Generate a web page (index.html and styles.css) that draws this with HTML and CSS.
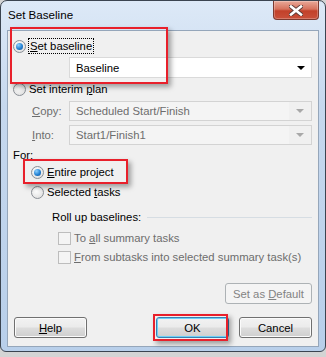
FILE: index.html
```html
<!DOCTYPE html>
<html lang="en">
<head>
  <meta charset="UTF-8" />
  <title>Set Baseline</title>
  <link rel="stylesheet" href="styles.css">
</head>
<body>
  <div class="window">
    <div class="titlebar">
      <span class="title">Set Baseline</span>
      <div class="close">
        <svg width="14" height="11" viewBox="0 0 14 11">
          <path d="M2 1.5 L12 9.5 M12 1.5 L2 9.5" stroke="#5a3a36" stroke-width="4.4" stroke-linecap="square" />
          <path d="M2 1.5 L12 9.5 M12 1.5 L2 9.5" stroke="#ffffff" stroke-width="2.6" stroke-linecap="square" />
        </svg>
      </div>
    </div>

    <div class="client">
      <div class="row first">
        <span class="radio on"></span>
        <span class="focus"><u>S</u>et baseline</span>
      </div>
      <div class="combo main">
        <span>Baseline</span>
        <span class="arrow"></span>
      </div>

      <div class="row interim">
        <span class="radio"></span>
        <span>Set interim <u>p</u>lan</span>
      </div>
      <div class="field copy">
        <label class="muted"><u>C</u>opy:</label>
        <div class="combo off"><span>Scheduled Start/Finish</span><span class="arrow-box"><span class="arrow"></span></span></div>
      </div>
      <div class="field into">
        <label class="muted"><u>I</u>nto:</label>
        <div class="combo off"><span>Start1/Finish1</span><span class="arrow-box"><span class="arrow"></span></span></div>
      </div>

      <div class="row for">For:</div>
      <div class="row indent entire">
        <span class="radio on"></span>
        <span><u>E</u>ntire project</span>
      </div>
      <div class="row indent selected">
        <span class="radio"></span>
        <span>Selected <u>t</u>asks</span>
      </div>

      <div class="row group">
        <span>Roll up baselines:</span>
        <span class="rule"></span>
      </div>
      <div class="row check first-check">
        <span class="box"></span>
        <span class="muted">To <u>a</u>ll summary tasks</span>
      </div>
      <div class="row check second-check">
        <span class="box"></span>
        <span class="muted"><u>F</u>rom subtasks into selected summary task(s)</span>
      </div>

      <div class="default-row">
        <button class="btn disabled">Set as <u>D</u>efault</button>
      </div>
      <div class="actions">
        <button class="btn help"><u>H</u>elp</button>
        <button class="btn ok">OK</button>
        <button class="btn cancel">Cancel</button>
      </div>
    </div>

    <div class="mark mark-baseline"></div>
    <div class="mark mark-entire"></div>
    <div class="mark mark-ok"></div>
  </div>
</body>
</html>
```

FILE: styles.css
```css
* {
  box-sizing: border-box;
}

body {
  margin: 0;
  background: #d4d4d4;
  font-family: "Liberation Sans", Arial, sans-serif;
  font-size: 11.3px;
  color: #000;
}

.window {
  position: relative;
  width: 326px;
  height: 352px;
  border: 1px solid #3b4450;
  border-radius: 7px 7px 6px 6px;
  background: linear-gradient(#dde9f7, #c6d8ee 30%, #b8cfea);
  padding: 0 6px 4px 6px;
  display: flex;
  flex-direction: column;
}

.titlebar {
  height: 29px;
  display: flex;
  justify-content: space-between;
  align-items: flex-start;
}

.title {
  margin: 7px 0 0 1px;
  font-size: 11.6px;
}

.close {
  width: 46px;
  height: 19px;
  border: 1px solid #7c3a30;
  border-top: none;
  border-radius: 0 0 4px 4px;
  background: linear-gradient(#e9a999, #d6725d 45%, #c2412a 55%, #c9503a);
  box-shadow: inset 0 0 0 1px rgba(255,255,255,0.25);
  display: flex;
  align-items: center;
  justify-content: center;
}

.client {
  height: 317px;
  background: #f0f0f0;
  border: 1px solid #95a6ba;
  padding: 6px 6px 0 5px;
  display: flex;
  flex-direction: column;
}

.row {
  height: 16px;
  display: flex;
  align-items: center;
  white-space: nowrap;
}

.first { margin-top: 1px; }
.interim { margin-top: 3px; }
.copy { margin-top: 4px; }
.into { margin-top: 4px; }
.for { margin-top: 2px; }
.entire { margin-top: 1px; }
.selected { margin-top: 4px; }
.group { margin-top: 9px; padding-left: 39px; }
.first-check { margin-top: 5px; }
.second-check { margin-top: 3px; }

.indent {
  padding-left: 18px;
}

.check {
  padding-left: 45px;
}

.radio {
  width: 13px;
  height: 13px;
  border-radius: 50%;
  border: 1px solid #8a8f96;
  background: radial-gradient(circle at 40% 35%, #ffffff, #e4e4e4 70%, #d2d2d2);
  margin-right: 3px;
  flex: none;
  position: relative;
}

.radio.on::after {
  content: "";
  position: absolute;
  left: 2px;
  top: 2px;
  width: 7px;
  height: 7px;
  border-radius: 50%;
  background: radial-gradient(circle at 35% 30%, #8fd2ff, #2482d4 55%, #0d4f93);
}

.focus {
  border: 1px dotted #000;
  padding: 0 1px;
  line-height: 14px;
  margin-left: -1px;
}

.combo {
  display: flex;
  align-items: center;
  justify-content: space-between;
  white-space: nowrap;
}

.combo.main {
  margin: 3px 0 0 56px;
  height: 21px;
  background: #fff;
  border: 1px solid #dadada;
  padding: 0 6px 0 6px;
}

.arrow {
  width: 0;
  height: 0;
  border-left: 4px solid transparent;
  border-right: 4px solid transparent;
  border-top: 4px solid #000;
}

.field {
  display: flex;
  align-items: center;
  height: 20px;
}

.field label {
  width: 56px;
  padding-left: 19px;
}

.combo.off {
  flex: 1;
  height: 20px;
  border: 1px solid #d3d3d3;
  background: #f4f4f4;
  color: #6d6d6d;
  padding-left: 6px;
}

.arrow-box {
  width: 22px;
  height: 18px;
  background: #f0f0f0;
  display: flex;
  align-items: center;
  justify-content: center;
}

.arrow-box .arrow {
  border-top-color: #a8a8a8;
}

.muted {
  color: #6d6d6d;
}

.rule {
  flex: 1;
  height: 1px;
  background: #d6dde3;
  margin-left: 6px;
}

.box {
  width: 13px;
  height: 13px;
  border: 1px solid #bdbdbd;
  background: #f4f4f4;
  margin-right: 3px;
  flex: none;
}

.default-row {
  margin-top: 18px;
  display: flex;
  justify-content: flex-end;
}

.btn {
  height: 21px;
  width: 73px;
  padding: 0;
  font: inherit;
  color: #000;
  border: 1px solid #707070;
  border-radius: 3px;
  background: linear-gradient(#f2f2f2, #ebebeb 48%, #dddddd 52%, #cfcfcf);
  box-shadow: inset 0 0 0 1px #fbfbfb;
}

.btn.disabled {
  width: 87px;
  color: #838383;
  border-color: #adb2b5;
  background: #f4f4f4;
  box-shadow: none;
}

.actions {
  margin-top: 13px;
  display: flex;
  padding-left: 1px;
}

.btn.ok {
  margin-left: auto;
  border-color: #3c7fb1;
  box-shadow: inset 0 0 0 1px #6ad0f7;
}

.btn.cancel {
  margin-left: 10px;
}

.mark {
  position: absolute;
  border: 2px solid #e8202b;
  box-shadow: 3px 3px 5px rgba(0,0,0,0.35);
}

.mark-baseline {
  left: 9px;
  top: 26px;
  width: 158px;
  height: 57px;
}

.mark-entire {
  left: 22px;
  top: 158px;
  width: 105px;
  height: 25px;
}

.mark-ok {
  left: 152px;
  top: 313px;
  width: 75px;
  height: 27px;
}
```
